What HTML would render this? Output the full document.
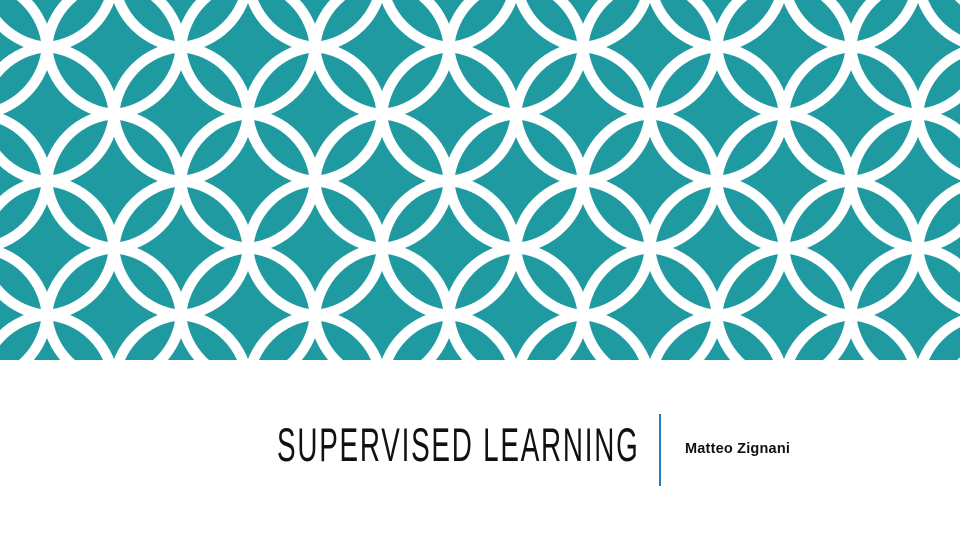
<!DOCTYPE html>
<html><head><style>
html,body{margin:0;padding:0;width:960px;height:540px;overflow:hidden;background:#fff}
.t{position:absolute;left:277px;top:419px;font-family:"Liberation Sans",sans-serif;font-size:47px;line-height:52px;letter-spacing:3px;color:#111;transform:scaleX(0.592);transform-origin:0 0;white-space:nowrap}
.line{position:absolute;left:659px;top:414px;width:2px;height:72px;background:#1f7fbf}
.a{position:absolute;left:685px;top:441px;font-family:"Liberation Sans",sans-serif;font-weight:bold;font-size:14.5px;line-height:16px;letter-spacing:0.2px;color:#111;white-space:nowrap}
</style></head><body>
<svg width="960" height="360" style="position:absolute;left:0;top:0">
<defs><pattern id="p" width="134" height="134" patternUnits="userSpaceOnUse" patternTransform="translate(47,47)">
<g fill="none" stroke="#fff" stroke-width="10.5" stroke-linejoin="round">
<path d="M0 0 A73 73 0 0 1 67 67 A73 73 0 0 1 0 0Z"/>
<path d="M67 67 A73 73 0 0 1 134 134 A73 73 0 0 1 67 67Z"/>
<path d="M134 0 A73 73 0 0 1 67 67 A73 73 0 0 1 134 0Z"/>
<path d="M67 67 A73 73 0 0 1 0 134 A73 73 0 0 1 67 67Z"/>
</g></pattern></defs>
<rect width="960" height="360" fill="#1f9aa0"/>
<rect width="960" height="360" fill="url(#p)"/>
</svg>
<div class="t">SUPERVISED LEARNING</div>
<div class="line"></div>
<div class="a">Matteo Zignani</div>
</body></html>
